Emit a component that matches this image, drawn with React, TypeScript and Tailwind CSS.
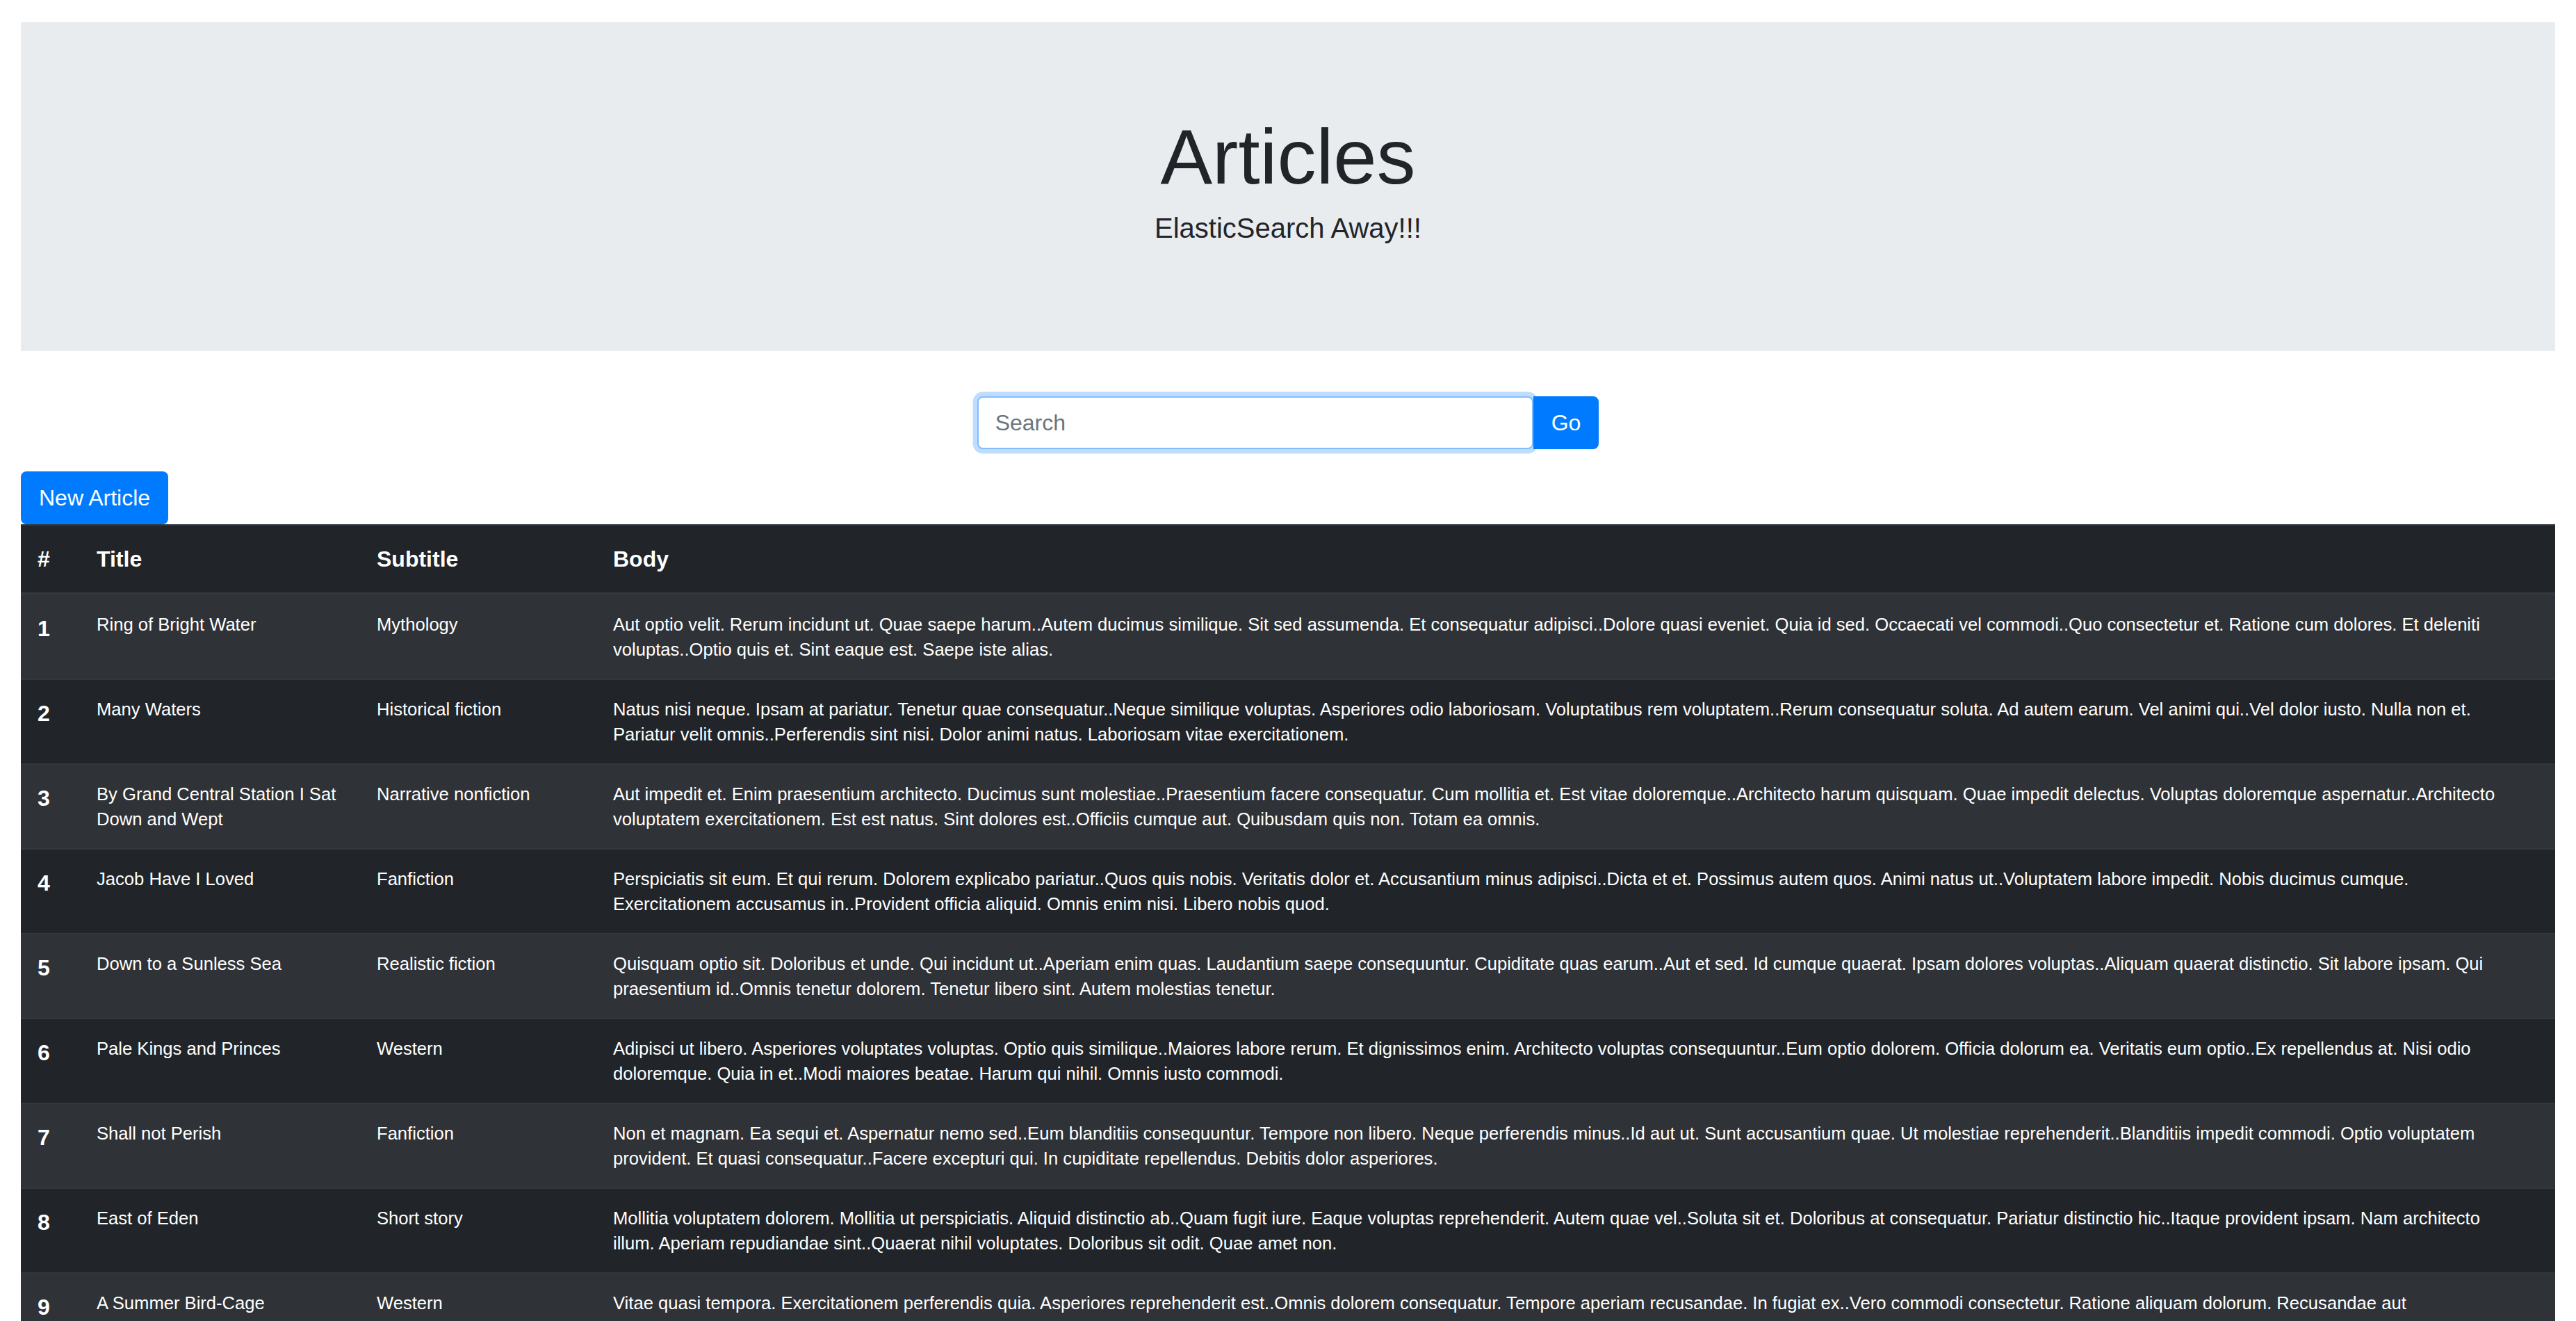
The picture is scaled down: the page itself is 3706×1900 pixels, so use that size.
import React from 'react'

const articles = [
    {
        title: 'Ring of Bright Water',
        subtitle: 'Mythology',
        body: 'Aut optio velit. Rerum incidunt ut. Quae saepe harum..Autem ducimus similique. Sit sed assumenda. Et consequatur adipisci..Dolore quasi eveniet. Quia id sed. Occaecati vel commodi..Quo consectetur et. Ratione cum dolores. Et deleniti voluptas..Optio quis et. Sint eaque est. Saepe iste alias.',
    },
    {
        title: 'Many Waters',
        subtitle: 'Historical fiction',
        body: 'Natus nisi neque. Ipsam at pariatur. Tenetur quae consequatur..Neque similique voluptas. Asperiores odio laboriosam. Voluptatibus rem voluptatem..Rerum consequatur soluta. Ad autem earum. Vel animi qui..Vel dolor iusto. Nulla non et. Pariatur velit omnis..Perferendis sint nisi. Dolor animi natus. Laboriosam vitae exercitationem.',
    },
    {
        title: 'By Grand Central Station I Sat Down and Wept',
        subtitle: 'Narrative nonfiction',
        body: 'Aut impedit et. Enim praesentium architecto. Ducimus sunt molestiae..Praesentium facere consequatur. Cum mollitia et. Est vitae doloremque..Architecto harum quisquam. Quae impedit delectus. Voluptas doloremque aspernatur..Architecto voluptatem exercitationem. Est est natus. Sint dolores est..Officiis cumque aut. Quibusdam quis non. Totam ea omnis.',
    },
    {
        title: 'Jacob Have I Loved',
        subtitle: 'Fanfiction',
        body: 'Perspiciatis sit eum. Et qui rerum. Dolorem explicabo pariatur..Quos quis nobis. Veritatis dolor et. Accusantium minus adipisci..Dicta et et. Possimus autem quos. Animi natus ut..Voluptatem labore impedit. Nobis ducimus cumque. Exercitationem accusamus in..Provident officia aliquid. Omnis enim nisi. Libero nobis quod.',
    },
    {
        title: 'Down to a Sunless Sea',
        subtitle: 'Realistic fiction',
        body: 'Quisquam optio sit. Doloribus et unde. Qui incidunt ut..Aperiam enim quas. Laudantium saepe consequuntur. Cupiditate quas earum..Aut et sed. Id cumque quaerat. Ipsam dolores voluptas..Aliquam quaerat distinctio. Sit labore ipsam. Qui praesentium id..Omnis tenetur dolorem. Tenetur libero sint. Autem molestias tenetur.',
    },
    {
        title: 'Pale Kings and Princes',
        subtitle: 'Western',
        body: 'Adipisci ut libero. Asperiores voluptates voluptas. Optio quis similique..Maiores labore rerum. Et dignissimos enim. Architecto voluptas consequuntur..Eum optio dolorem. Officia dolorum ea. Veritatis eum optio..Ex repellendus at. Nisi odio doloremque. Quia in et..Modi maiores beatae. Harum qui nihil. Omnis iusto commodi.',
    },
    {
        title: 'Shall not Perish',
        subtitle: 'Fanfiction',
        body: 'Non et magnam. Ea sequi et. Aspernatur nemo sed..Eum blanditiis consequuntur. Tempore non libero. Neque perferendis minus..Id aut ut. Sunt accusantium quae. Ut molestiae reprehenderit..Blanditiis impedit commodi. Optio voluptatem provident. Et quasi consequatur..Facere excepturi qui. In cupiditate repellendus. Debitis dolor asperiores.',
    },
    {
        title: 'East of Eden',
        subtitle: 'Short story',
        body: 'Mollitia voluptatem dolorem. Mollitia ut perspiciatis. Aliquid distinctio ab..Quam fugit iure. Eaque voluptas reprehenderit. Autem quae vel..Soluta sit et. Doloribus at consequatur. Pariatur distinctio hic..Itaque provident ipsam. Nam architecto illum. Aperiam repudiandae sint..Quaerat nihil voluptates. Doloribus sit odit. Quae amet non.',
    },
    {
        title: 'A Summer Bird-Cage',
        subtitle: 'Western',
        body: 'Vitae quasi tempora. Exercitationem perferendis quia. Asperiores reprehenderit est..Omnis dolorem consequatur. Tempore aperiam recusandae. In fugiat ex..Vero commodi consectetur. Ratione aliquam dolorum. Recusandae aut necessitatibus..Qui ut fugit. Sed aut dolores. Ipsa rerum est.',
    },
]

export default function App() {
    return (
        <div className="min-h-screen bg-white px-[30px] pt-[32px] font-['Liberation_Sans',Arial,sans-serif] text-[#212529]">
            {/* Jumbotron */}
            <div className="bg-[#e9ecef] pt-[127px] pb-[147px] text-center">
                <h1 className="text-[112px] leading-[134px] font-light mb-[5px]">Articles</h1>
                <p className="text-[40px] leading-[60px] font-light">ElasticSearch Away!!!</p>
            </div>

            {/* Search */}
            <form className="flex justify-center mt-[65px]" onSubmit={(e) => e.preventDefault()}>
                <input
                    type="text"
                    placeholder="Search"
                    className="w-[800px] h-[76px] px-[24px] text-[32px] text-[#495057] placeholder:text-[#6c757d] bg-white border-2 border-[#80bdff] rounded-[8px] outline-none shadow-[0_0_0_6.4px_rgba(0,123,255,0.25)]"
                />
                <button className="h-[76px] px-[24px] text-[32px] text-white bg-[#007bff] border-2 border-[#007bff] rounded-r-[8px]">
                    Go
                </button>
            </form>

            {/* New article */}
            <div className="mt-[32px]">
                <button className="h-[76px] px-[24px] text-[32px] text-white bg-[#007bff] border-2 border-[#007bff] rounded-[8px]">
                    New Article
                </button>
            </div>

            {/* Table */}
            <table className="w-full table-fixed border-collapse bg-[#212529] text-white text-left">
                <thead>
                    <tr>
                        <th className="w-[85px] p-[24px] text-[32px] leading-[48px] font-bold align-bottom border-t-2 border-b-4 border-[#32383e]">#</th>
                        <th className="w-[403px] p-[24px] text-[32px] leading-[48px] font-bold align-bottom border-t-2 border-b-4 border-[#32383e]">Title</th>
                        <th className="w-[340px] p-[24px] text-[32px] leading-[48px] font-bold align-bottom border-t-2 border-b-4 border-[#32383e]">Subtitle</th>
                        <th className="p-[24px] text-[32px] leading-[48px] font-bold align-bottom border-t-2 border-b-4 border-[#32383e]">Body</th>
                    </tr>
                </thead>
                <tbody>
                    {articles.map((a, i) => (
                        <tr key={i} className={i % 2 === 0 ? 'bg-[#2f3236]' : 'bg-[#212529]'}>
                            <th className="p-[24px] text-[32px] leading-[48px] font-bold align-top border-t-2 border-[#32383e]">{i + 1}</th>
                            <td className="p-[24px] text-[25.6px] leading-[36px] align-top border-t-2 border-[#32383e]">{a.title}</td>
                            <td className="p-[24px] text-[25.6px] leading-[36px] align-top border-t-2 border-[#32383e]">{a.subtitle}</td>
                            <td className="pl-[24px] pr-[56px] py-[24px] text-[25.6px] leading-[36px] align-top border-t-2 border-[#32383e]">{a.body}</td>
                        </tr>
                    ))}
                </tbody>
            </table>
        </div>
    )
}
